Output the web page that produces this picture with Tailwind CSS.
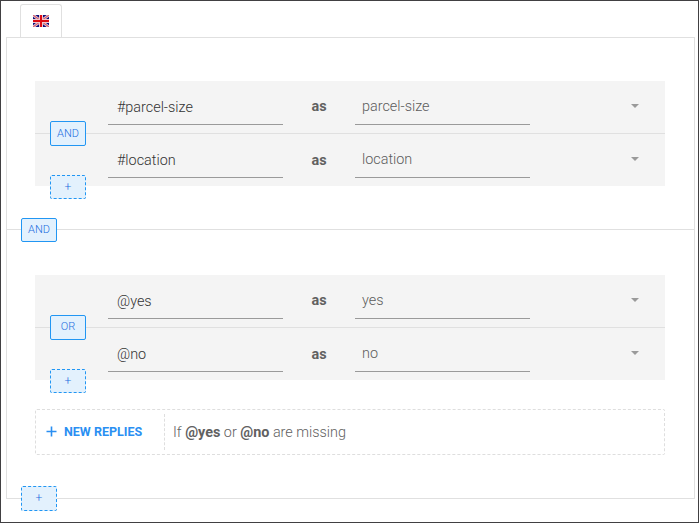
<!DOCTYPE html>
<html lang="en">
<head>
<meta charset="utf-8">
<title>Conditions</title>
<script src="https://cdn.jsdelivr.net/npm/@tailwindcss/browser@4"></script>
</head>
<body class="bg-white font-['Roboto','Liberation_Sans',sans-serif] text-[14.4px] leading-5 font-light text-[#555]">
<div class="w-[699px] h-[523px] border border-[#414042] pt-[3px] pl-[5px] overflow-hidden">
  <div class="ml-[14px] w-[42px] h-[33px] border border-b-0 border-[#e0e0e0] rounded-t-[3px] flex justify-center pt-[10px]">
    <svg width="16" height="12" viewBox="0 0 16 12">
      <rect width="16" height="12" fill="#0b0b78"/>
      <path d="M0 0L16 12M16 0L0 12" stroke="#e0ccdc" stroke-width="2.8"/>
      <path d="M0 0L16 12M16 0L0 12" stroke="#d8606c" stroke-width="1.2"/>
      <path d="M8 0V12M0 6H16" stroke="#f0c8cc" stroke-width="4"/>
      <path d="M8 0V12M0 6H16" stroke="#dd0a12" stroke-width="2"/>
    </svg>
  </div>

  <main class="relative w-[689px] h-[462px] border border-[#e0e0e0]">
    <section class="relative h-[192px] border-b border-[#e0e0e0] pt-[43px] pl-[28px]">
      <div class="relative w-[630px] h-[105px] bg-[#f4f4f4]">
        <div class="flex h-[53px] border-b border-[#e0e0e0] pl-[73px]">
          <div class="w-[175px] h-11 border-b border-[#9a9a9a] pl-[9px] pt-[17px] text-[#333]">#parcel-size</div>
          <div class="w-[72px] pt-4 text-center font-bold text-[#616161]">as</div>
          <div class="w-[175px] h-11 border-b border-[#9a9a9a] pl-[7px] pt-4 text-[#5c5c5c]">parcel-size</div>
          <svg class="ml-[101px] mt-[23px]" width="8" height="4"><path d="M0 0H8L4 4Z" fill="#9a9a9a"/></svg>
        </div>
        <div class="flex h-[52px] pl-[73px]">
          <div class="w-[175px] h-11 border-b border-[#9a9a9a] pl-[9px] pt-[17px] text-[#333]">#location</div>
          <div class="w-[72px] pt-[17px] text-center font-bold text-[#616161]">as</div>
          <div class="w-[175px] h-11 border-b border-[#9a9a9a] pl-[7px] pt-4 text-[#5c5c5c]">location</div>
          <svg class="ml-[101px] mt-[23px]" width="8" height="4"><path d="M0 0H8L4 4Z" fill="#9a9a9a"/></svg>
        </div>
        <div class="absolute left-[15px] top-10 w-9 h-[25px] border border-[#2196f3] rounded-[2px] bg-[#e3f1fd] text-[#1c6fe0] text-[11px] leading-[23px] text-center">AND</div>
        <div class="absolute left-[15px] top-[94px] w-9 h-6 border border-dashed border-[#2196f3] rounded-[2px] bg-[#e3f1fd] text-[#1c6fe0] text-[12px] leading-[22px] text-center">+</div>
      </div>
      <div class="absolute left-[14px] top-[180px] w-9 h-6 border border-[#2196f3] rounded-[2px] bg-[#e3f1fd] text-[#1c6fe0] text-[11px] leading-[22px] text-center">AND</div>
    </section>

    <section class="pt-[45px] pl-[28px]">
      <div class="relative w-[630px] h-[105px] bg-[#f4f4f4]">
        <div class="flex h-[53px] border-b border-[#e0e0e0] pl-[73px]">
          <div class="w-[175px] h-11 border-b border-[#9a9a9a] pl-[9px] pt-[17px] text-[#333]">@yes</div>
          <div class="w-[72px] pt-4 text-center font-bold text-[#616161]">as</div>
          <div class="w-[175px] h-11 border-b border-[#9a9a9a] pl-[7px] pt-4 text-[#5c5c5c]">yes</div>
          <svg class="ml-[101px] mt-[23px]" width="8" height="4"><path d="M0 0H8L4 4Z" fill="#9a9a9a"/></svg>
        </div>
        <div class="flex h-[52px] pl-[73px]">
          <div class="w-[175px] h-11 border-b border-[#9a9a9a] pl-[9px] pt-[17px] text-[#333]">@no</div>
          <div class="w-[72px] pt-[17px] text-center font-bold text-[#616161]">as</div>
          <div class="w-[175px] h-11 border-b border-[#9a9a9a] pl-[7px] pt-4 text-[#5c5c5c]">no</div>
          <svg class="ml-[101px] mt-[23px]" width="8" height="4"><path d="M0 0H8L4 4Z" fill="#9a9a9a"/></svg>
        </div>
        <div class="absolute left-[15px] top-10 w-9 h-[25px] border border-[#2196f3] rounded-[2px] bg-[#e3f1fd] text-[#1c6fe0] text-[11px] leading-[22px] text-center">OR</div>
        <div class="absolute left-[15px] top-[94px] w-9 h-6 border border-dashed border-[#2196f3] rounded-[2px] bg-[#e3f1fd] text-[#1c6fe0] text-[12px] leading-[22px] text-center">+</div>
      </div>
      <div class="mt-[29px] w-[630px] h-[46px] border border-dashed border-[#dedede] rounded-[2px] flex items-center">
        <div class="w-[129px] h-9 border-r border-dashed border-[#dedede] flex items-center pl-[10px] text-[#2a8ff2] text-[12.5px] font-bold whitespace-nowrap">
          <svg class="mr-[7px] -mt-[2px]" width="11" height="11"><path d="M5.5 0.5V10.5M0.5 5.5H10.5" stroke="#2a8ff2" stroke-width="1.6"/></svg>NEW REPLIES
        </div>
        <div class="pl-2 pt-[2px] text-[#616161]">If <b class="font-bold">@yes</b> or <b class="font-bold">@no</b> are missing</div>
      </div>
    </section>
    <div class="absolute left-[14px] top-[448px] w-9 h-[25px] border border-dashed border-[#2196f3] rounded-[2px] bg-[#e3f1fd] text-[#1c6fe0] text-[12px] leading-[23px] text-center">+</div>
  </main>
</div>
</body>
</html>
